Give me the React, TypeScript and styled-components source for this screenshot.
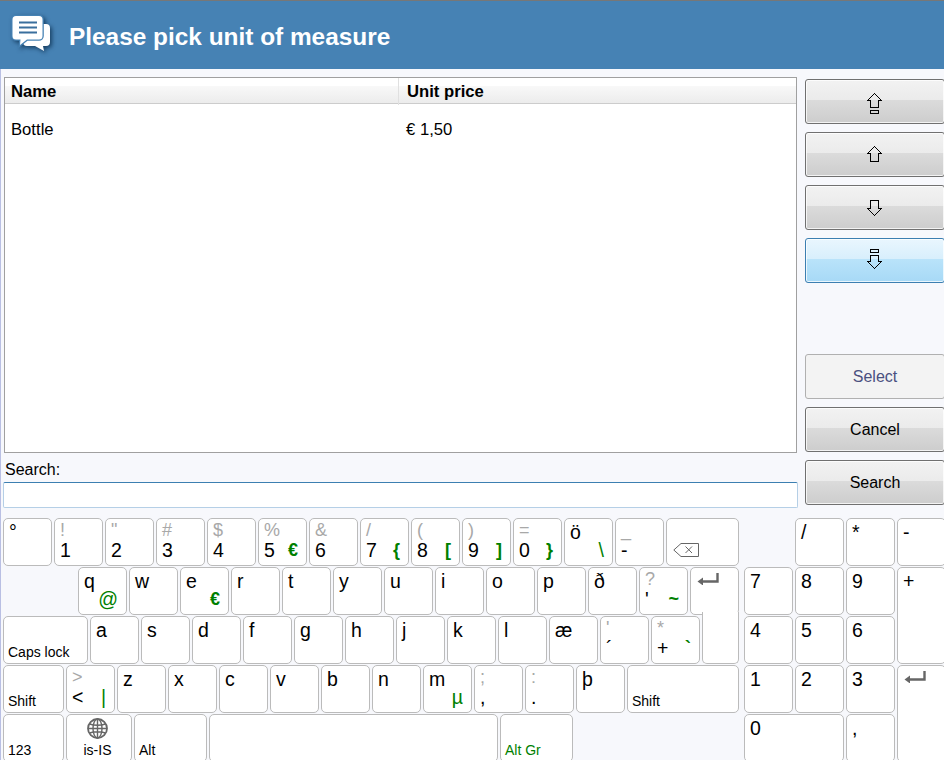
import React from "react";
import styled, { createGlobalStyle } from "styled-components";

const Global = createGlobalStyle`
  html, body { margin: 0; padding: 0; background: #f7f8fc; }
  * { box-sizing: border-box; }
`;

const Page = styled.div`
  width: 944px;
  height: 760px;
  overflow: hidden;
  display: flex;
  flex-direction: column;
  background: #f7f8fc;
  color: #000;
  font-family: "Liberation Sans", Arial, sans-serif;
  font-size: 16px;
`;

const Header = styled.header`
  flex: none;
  height: 69px;
  display: flex;
  align-items: center;
  gap: 14px;
  padding-left: 11px;
  background: #4682b4;
  border-top: 1px solid #777;
`;

const ChatIcon = styled.svg`
  flex: none;
  width: 44px;
  height: 40px;
  margin-bottom: 2px;
  filter: drop-shadow(2px 2px 2px rgba(0, 30, 60, 0.65));
`;

const Title = styled.h1`
  margin: 3px 0 0;
  color: #fff;
  font-size: 24.4px;
  font-weight: bold;
  line-height: 30px;
`;

const Body = styled.div`
  flex: 1;
  min-height: 0;
  display: flex;
  flex-direction: column;
  border-left: 1px solid #b9bfe3;
`;

const Main = styled.div`
  flex: none;
  height: 449px;
  display: flex;
  gap: 7px;
  padding: 8px 0 0 2px;
`;

const LeftCol = styled.div`
  flex: none;
  width: 795px;
  height: 431px;
  display: flex;
  flex-direction: column;
`;

const Table = styled.div`
  flex: none;
  height: 376px;
  margin: 0 1px;
  background: #fff;
  border: 1px solid #a0a0a0;
  font-size: 16.67px;
`;

const TableHead = styled.div`
  height: 26px;
  display: grid;
  grid-template-columns: 393px 1fr;
  border-bottom: 1px solid #ccc;
  background: linear-gradient(#fff 0, #fff 33%, #f8f8f8 34%, #ececec 100%);
  font-weight: bold;
  line-height: 26px;
`;

const HeadCell = styled.div`
  padding: 1px 0 0 6px;
  & + & {
    padding-left: 8px;
    border-left: 1px solid #e0e0e0;
  }
`;

const TableRow = styled.div`
  display: grid;
  grid-template-columns: 393px 1fr;
  padding-top: 16px;
  line-height: 19px;
`;

const Cell = styled.div`
  padding-left: 6px;
  & + & { padding-left: 8px; }
`;

const SearchLabel = styled.label`
  margin: 7px 0 0 2px;
  line-height: 19px;
`;

const SearchBox = styled.div`
  flex: none;
  height: 26px;
  margin-top: 3px;
  background: #fff;
  border: 1px solid #b5cfe6;
  border-top-color: #3c7fb1;
  border-radius: 2px;
`;

const RightCol = styled.div`
  flex: none;
  width: 140px;
  height: 426px;
  margin-top: 2px;
  display: flex;
  flex-direction: column;
  gap: 8px;
`;

const Spacer = styled.div`
  flex: 1;
`;

const SideButton = styled.div<{ $tone?: "normal" | "hover" | "disabled" }>`
  flex: none;
  height: 45px;
  display: flex;
  align-items: center;
  justify-content: center;
  border-radius: 3px;
  border: 1px solid
    ${(p) => (p.$tone === "hover" ? "#3c7fb1" : p.$tone === "disabled" ? "#b0b0b0" : "#707070")};
  box-shadow: inset 0 0 0 1px ${(p) => (p.$tone === "disabled" ? "#f3f3f3" : "rgba(255,255,255,.75)")};
  color: ${(p) => (p.$tone === "disabled" ? "#4a5080" : "#000")};
  background: ${(p) =>
    p.$tone === "hover"
      ? "linear-gradient(#e9f6fe 0, #d8effc 46%, #b9e3fa 47%, #a7d9f6 100%)"
      : p.$tone === "disabled"
      ? "#f3f3f3"
      : "linear-gradient(#f2f2f2 0, #ebebeb 46%, #dbdbdb 47%, #cdcdcd 100%)"};
`;

const ArrowIcon = styled.svg`
  width: 15px;
  height: 24px;
  margin-right: 2px;
  fill: none;
  stroke: #000;
  stroke-width: 1;
`;

const Keyboard = styled.div`
  flex: none;
  display: flex;
  gap: 5px;
  padding-left: 2px;
`;

const MainKeys = styled.div`
  flex: none;
  width: 736px;
  display: flex;
  flex-direction: column;
  gap: 1px;
`;

const KeyRow = styled.div<{ $indent?: number }>`
  display: flex;
  gap: 2px;
  height: 48px;
  margin-left: ${(p) => p.$indent ?? 0}px;
`;

const Key = styled.div<{ $w?: number; $col?: number; $row?: number; $start?: number }>`
  flex: none;
  ${(p) => (p.$w ? `width: ${p.$w}px;` : "")}
  ${(p) => (p.$col ? `grid-column: span ${p.$col};` : "")}
  ${(p) => (p.$row ? `grid-row: span ${p.$row};` : "")}
  ${(p) => (p.$start ? `grid-column-start: ${p.$start};` : "")}
  display: flex;
  flex-direction: column;
  padding: 2px 8px 3px 5px;
  background: #fff;
  border: 1px solid #bbb;
  border-radius: 5px;
  font-size: 19.5px;
`;

const EnterTail = styled(Key)`
  position: relative;
  z-index: 1;
  height: 52px;
  margin-top: -4px;
  border-top: none;
  border-radius: 0 0 5px 5px;
`;

const TopLine = styled.div`
  height: 19px;
  line-height: 19px;
  display: flex;
  justify-content: space-between;
  white-space: nowrap;
`;

const BottomLine = styled.div`
  height: 21px;
  line-height: 21px;
  display: flex;
  justify-content: space-between;
  white-space: nowrap;
`;

const LetterChar = styled.span`
  margin-top: 2px;
`;

const ShiftChar = styled.span`
  color: #a8a8a8;
  font-size: 18px;
`;

const AltChar = styled.span<{ $thin?: boolean }>`
  color: #008000;
  font-size: ${(p) => (p.$thin ? 19.5 : 18)}px;
  font-weight: ${(p) => (p.$thin ? "normal" : "bold")};
`;

const ActionLabel = styled.div<{ $green?: boolean; $center?: boolean }>`
  margin: auto ${(p) => (p.$center ? 0 : -6)}px 0 ${(p) => (p.$center ? 0 : -1)}px;
  font-size: 14px;
  line-height: 16px;
  white-space: nowrap;
  color: ${(p) => (p.$green ? "#008000" : "#000")};
  text-align: ${(p) => (p.$center ? "center" : "left")};
`;

const WideLabel = styled.div`
  margin: 2px -6px 0 0;
  line-height: 19px;
`;

const Numpad = styled.div`
  flex: none;
  display: grid;
  grid-template-columns: repeat(4, 49px);
  grid-auto-rows: 48px;
  gap: 1px 2px;
`;

const GrayIcon = styled.svg`
  display: block;
  fill: none;
  stroke: #666;
`;

const BackspaceWrap = styled.div`
  margin: 22px 0 0 1px;
`;

const EnterWrap = styled.div`
  margin: 3px 0 0 1px;
`;

const GlobeWrap = styled.div`
  display: flex;
  justify-content: center;
  margin-top: 1px;
`;

type K = { m?: string; s?: string; a?: string; low?: boolean; thin?: boolean };

const row1: K[] = [
  { m: "°" },
  { m: "1", s: "!", low: true },
  { m: "2", s: '"', low: true },
  { m: "3", s: "#", low: true },
  { m: "4", s: "$", low: true },
  { m: "5", s: "%", a: "€", low: true },
  { m: "6", s: "&", low: true },
  { m: "7", s: "/", a: "{", low: true },
  { m: "8", s: "(", a: "[", low: true },
  { m: "9", s: ")", a: "]", low: true },
  { m: "0", s: "=", a: "}", low: true },
  { m: "ö", a: "\\", thin: true },
  { m: "-", s: "_", low: true },
];
const row2: K[] = [
  { m: "q", a: "@", thin: true },
  { m: "w" },
  { m: "e", a: "€" },
  { m: "r" },
  { m: "t" },
  { m: "y" },
  { m: "u" },
  { m: "i" },
  { m: "o" },
  { m: "p" },
  { m: "ð" },
  { m: "'", s: "?", a: "~", low: true },
];
const row3: K[] = [
  { m: "a" },
  { m: "s" },
  { m: "d" },
  { m: "f" },
  { m: "g" },
  { m: "h" },
  { m: "j" },
  { m: "k" },
  { m: "l" },
  { m: "æ" },
  { m: "´", s: "'", low: true },
  { m: "+", s: "*", a: "`", low: true },
];
const row4: K[] = [
  { m: "<", s: ">", a: "|", low: true, thin: true },
  { m: "z" },
  { m: "x" },
  { m: "c" },
  { m: "v" },
  { m: "b" },
  { m: "n" },
  { m: "m", a: "µ", thin: true },
  { m: ",", s: ";", low: true },
  { m: ".", s: ":", low: true },
  { m: "þ" },
];

const CharKey = ({ k }: { k: K }) => (
  <Key $w={49}>
    <TopLine>{k.low ? <ShiftChar>{k.s}</ShiftChar> : <LetterChar>{k.m}</LetterChar>}</TopLine>
    <BottomLine>
      <span>{k.low ? k.m : ""}</span>
      {k.a ? <AltChar $thin={k.thin}>{k.a}</AltChar> : null}
    </BottomLine>
  </Key>
);

const EnterArrow = () => (
  <EnterWrap>
    <GrayIcon width="22" height="12" viewBox="0 0 22 12">
      <path d="M20.500 0v8.500H4" strokeWidth="2.400" />
      <path d="M0.500 8.500 6 4.500v8z" fill="#666" stroke="none" />
    </GrayIcon>
  </EnterWrap>
);

const Globe = () => (
  <GlobeWrap>
    <GrayIcon width="21" height="21" viewBox="0 0 21 21" strokeWidth="1.400">
      <circle cx="10.500" cy="10.500" r="9.500" strokeWidth="1.800" />
      <ellipse cx="10.500" cy="10.500" rx="4.500" ry="9.500" />
      <path d="M10.500 1v19M1 10.500h19M2.500 6c5 1.600 11 1.600 16 0M2.500 15c5-1.600 11-1.600 16 0" />
    </GrayIcon>
  </GlobeWrap>
);

const Arrow = ({ d }: { d: string }) => (
  <ArrowIcon viewBox="0 0 15 24" shapeRendering="crispEdges">
    <path d={d} />
  </ArrowIcon>
);

export default function App() {
  return (
    <Page>
      <Global />
      <Header>
        <ChatIcon viewBox="0 0 44 40">
          <path
            d="M16 10h19a4 4 0 0 1 4 4v14a4 4 0 0 1-4 4h-3l1 5-9-5h-8a4 4 0 0 1-4-4V14a4 4 0 0 1 4-4z"
            fill="#fff"
          />
          <path
            d="M5 2h23a3.500 3.500 0 0 1 3.500 3.500V22a3.500 3.500 0 0 1-3.500 3.500H16l-7 5.500 .5-5.500H5A3.500 3.500 0 0 1 1.500 22V5.500A3.500 3.500 0 0 1 5 2z"
            fill="#fff"
            stroke="#4682b4"
            strokeWidth="2.600"
            paintOrder="stroke"
          />
          <path d="M8 8.500h18M8 13.500h18M8 18.500h18" stroke="#3a6f9d" strokeWidth="2" />
        </ChatIcon>
        <Title>Please pick unit of measure</Title>
      </Header>
      <Body>
        <Main>
          <LeftCol>
            <Table>
              <TableHead>
                <HeadCell>Name</HeadCell>
                <HeadCell>Unit price</HeadCell>
              </TableHead>
              <TableRow>
                <Cell>Bottle</Cell>
                <Cell>€ 1,50</Cell>
              </TableRow>
            </Table>
            <SearchLabel>Search:</SearchLabel>
            <SearchBox />
          </LeftCol>
          <RightCol>
            <SideButton>
              <Arrow d="M7.500 3.500l7 7h-3v7h-8v-7h-3zM3.500 20.500h8v3h-8z" />
            </SideButton>
            <SideButton>
              <Arrow d="M7.500 3.500l7 7h-3v8h-8v-8h-3z" />
            </SideButton>
            <SideButton>
              <Arrow d="M3.500 4.500h8v8h3l-7 7-7-7h3z" />
            </SideButton>
            <SideButton $tone="hover">
              <Arrow d="M3.500 .5h8v3h-8zM3.500 6.500h8v6h3l-7 7-7-7h3z" />
            </SideButton>
            <Spacer />
            <SideButton $tone="disabled">Select</SideButton>
            <SideButton>Cancel</SideButton>
            <SideButton>Search</SideButton>
          </RightCol>
        </Main>
        <Keyboard>
          <MainKeys>
            <KeyRow>
              {row1.map((k, i) => (
                <CharKey key={i} k={k} />
              ))}
              <Key $w={73}>
                <BackspaceWrap>
                  <GrayIcon width="26" height="14" viewBox="0 0 26 14">
                    <path d="M8 .5h17.500v13H8L.8 7z" strokeWidth="1" />
                    <path d="M12.500 3.500l6.500 6.500M19 3.500l-6.500 6.500" strokeWidth="1" />
                  </GrayIcon>
                </BackspaceWrap>
              </Key>
            </KeyRow>
            <KeyRow $indent={75}>
              {row2.map((k, i) => (
                <CharKey key={i} k={k} />
              ))}
              <Key $w={49}>
                <EnterArrow />
              </Key>
            </KeyRow>
            <KeyRow>
              <Key $w={85}>
                <ActionLabel>Caps lock</ActionLabel>
              </Key>
              {row3.map((k, i) => (
                <CharKey key={i} k={k} />
              ))}
              <EnterTail $w={37} />
            </KeyRow>
            <KeyRow>
              <Key $w={61}>
                <ActionLabel>Shift</ActionLabel>
              </Key>
              {row4.map((k, i) => (
                <CharKey key={i} k={k} />
              ))}
              <Key $w={112}>
                <ActionLabel>Shift</ActionLabel>
              </Key>
            </KeyRow>
            <KeyRow>
              <Key $w={61}>
                <ActionLabel>123</ActionLabel>
              </Key>
              <Key $w={66}>
                <Globe />
                <ActionLabel $center>is-IS</ActionLabel>
              </Key>
              <Key $w={73}>
                <ActionLabel>Alt</ActionLabel>
              </Key>
              <Key $w={289} />
              <Key $w={73}>
                <ActionLabel $green>Alt Gr</ActionLabel>
              </Key>
            </KeyRow>
          </MainKeys>
          <Numpad>
            <Key $start={2}>
              <WideLabel>/</WideLabel>
            </Key>
            <Key>
              <WideLabel>*</WideLabel>
            </Key>
            <Key>
              <WideLabel>-</WideLabel>
            </Key>
            <Key>
              <WideLabel>7</WideLabel>
            </Key>
            <Key>
              <WideLabel>8</WideLabel>
            </Key>
            <Key>
              <WideLabel>9</WideLabel>
            </Key>
            <Key $row={2}>
              <WideLabel>+</WideLabel>
            </Key>
            <Key>
              <WideLabel>4</WideLabel>
            </Key>
            <Key>
              <WideLabel>5</WideLabel>
            </Key>
            <Key>
              <WideLabel>6</WideLabel>
            </Key>
            <Key>
              <WideLabel>1</WideLabel>
            </Key>
            <Key>
              <WideLabel>2</WideLabel>
            </Key>
            <Key>
              <WideLabel>3</WideLabel>
            </Key>
            <Key $row={2}>
              <EnterArrow />
            </Key>
            <Key $col={2}>
              <WideLabel>0</WideLabel>
            </Key>
            <Key>
              <WideLabel>,</WideLabel>
            </Key>
          </Numpad>
        </Keyboard>
      </Body>
    </Page>
  );
}
